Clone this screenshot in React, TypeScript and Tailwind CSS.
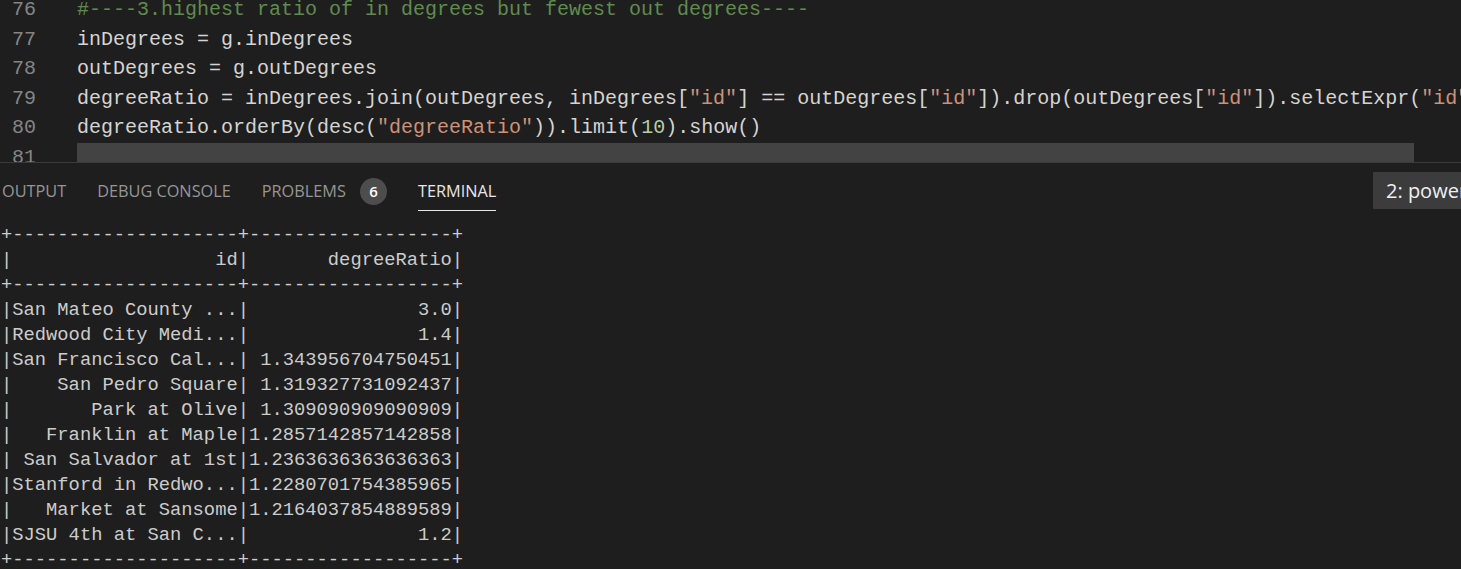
import React from "react";

const C = "text-[#d4d4d4]";
const S = "text-[#ce9178]";
const N = "text-[#b5cea8]";
const G = "text-[#608b4e]";

type Tok = [string, string];

const lines: { n: number; toks: Tok[] }[] = [
  { n: 76, toks: [["#----3.highest ratio of in degrees but fewest out degrees----", G]] },
  { n: 77, toks: [["inDegrees = g.inDegrees", C]] },
  { n: 78, toks: [["outDegrees = g.outDegrees", C]] },
  {
    n: 79,
    toks: [
      ["degreeRatio = inDegrees.join(outDegrees, inDegrees[", C],
      ['"id"', S],
      ["] == outDegrees[", C],
      ['"id"', S],
      ["]).drop(outDegrees[", C],
      ['"id"', S],
      ["]).selectExpr(", C],
      ['"id", "inDegree/outDegree as degreeRatio")', S],
    ],
  },
  {
    n: 80,
    toks: [
      ["degreeRatio.orderBy(desc(", C],
      ['"degreeRatio"', S],
      [")).limit(", C],
      ["10", N],
      [").show()", C],
    ],
  },
  { n: 81, toks: [["", C]] },
];

const term = [
  "+--------------------+------------------+",
  "|                  id|       degreeRatio|",
  "+--------------------+------------------+",
  "|San Mateo County ...|               3.0|",
  "|Redwood City Medi...|               1.4|",
  "|San Francisco Cal...| 1.343956704750451|",
  "|    San Pedro Square| 1.319327731092437|",
  "|       Park at Olive| 1.309090909090909|",
  "|   Franklin at Maple|1.2857142857142858|",
  "| San Salvador at 1st|1.2363636363636363|",
  "|Stanford in Redwo...|1.2280701754385965|",
  "|   Market at Sansome|1.2164037854889589|",
  "|SJSU 4th at San C...|               1.2|",
  "+--------------------+------------------+",
];

export default function App() {
  return (
    <div className="w-[1461px] h-[569px] bg-[#1e1e1e] overflow-hidden flex flex-col">
      {/* Editor */}
      <div className="relative h-[162px] shrink-0 overflow-hidden">
        <div
          className="mt-[-5px] text-[20px] leading-[29.6px] whitespace-pre"
          style={{ fontFamily: '"Liberation Mono", monospace' }}
        >
          {lines.map((l) => (
            <div key={l.n} className="flex h-[29.6px]">
              <div className="w-[36px] text-right text-[#858585] shrink-0">{l.n}</div>
              <div className="pl-[41px]">
                {l.toks.map((t, i) => (
                  <span key={i} className={t[1]}>
                    {t[0]}
                  </span>
                ))}
              </div>
            </div>
          ))}
        </div>
        <div className="absolute left-[77px] top-[143px] w-[1337px] h-[19px] bg-[#434343]" />
      </div>
      <div className="h-px bg-[#3a3a3a] shrink-0" />

      {/* Panel header */}
      <div
        className="flex items-center h-[52px] shrink-0 text-[16.3px]"
        style={{ fontFamily: '"Open Sans", "Noto Sans", sans-serif' }}
      >
        <div className="flex items-center pl-[2px] gap-[31px] flex-1 h-full pt-[4px]">
          <span className="text-[#969696]">OUTPUT</span>
          <span className="text-[#969696]">DEBUG CONSOLE</span>
          <span className="flex items-center gap-[14px]">
            <span className="text-[#969696]">PROBLEMS</span>
            <span className="w-[27px] h-[27px] rounded-full bg-[#4d4d4d] text-white text-[15px] font-semibold flex items-center justify-center">
              6
            </span>
          </span>
          <span className="relative text-[#e7e7e7] h-full flex items-center">
            TERMINAL
            <span className="absolute left-0 right-0 bottom-[4px] h-[1.5px] bg-[#e7e7e7]" />
          </span>
        </div>
        <div className="self-start mt-[9px] h-[37px] w-[88px] bg-[#3c3c3c] pl-[13px] flex items-center text-[20px] text-[#f0f0f0] whitespace-nowrap overflow-hidden">
          2: powershell
        </div>
      </div>

      {/* Terminal */}
      <div
        className="pl-[1px] mt-[8px] text-[18.8px] leading-[25px] text-[#cccccc] whitespace-pre"
        style={{ fontFamily: '"Liberation Mono", monospace' }}
      >
        {term.map((t, i) => (
          <div key={i} className="h-[25px]">
            {t}
          </div>
        ))}
      </div>
    </div>
  );
}
